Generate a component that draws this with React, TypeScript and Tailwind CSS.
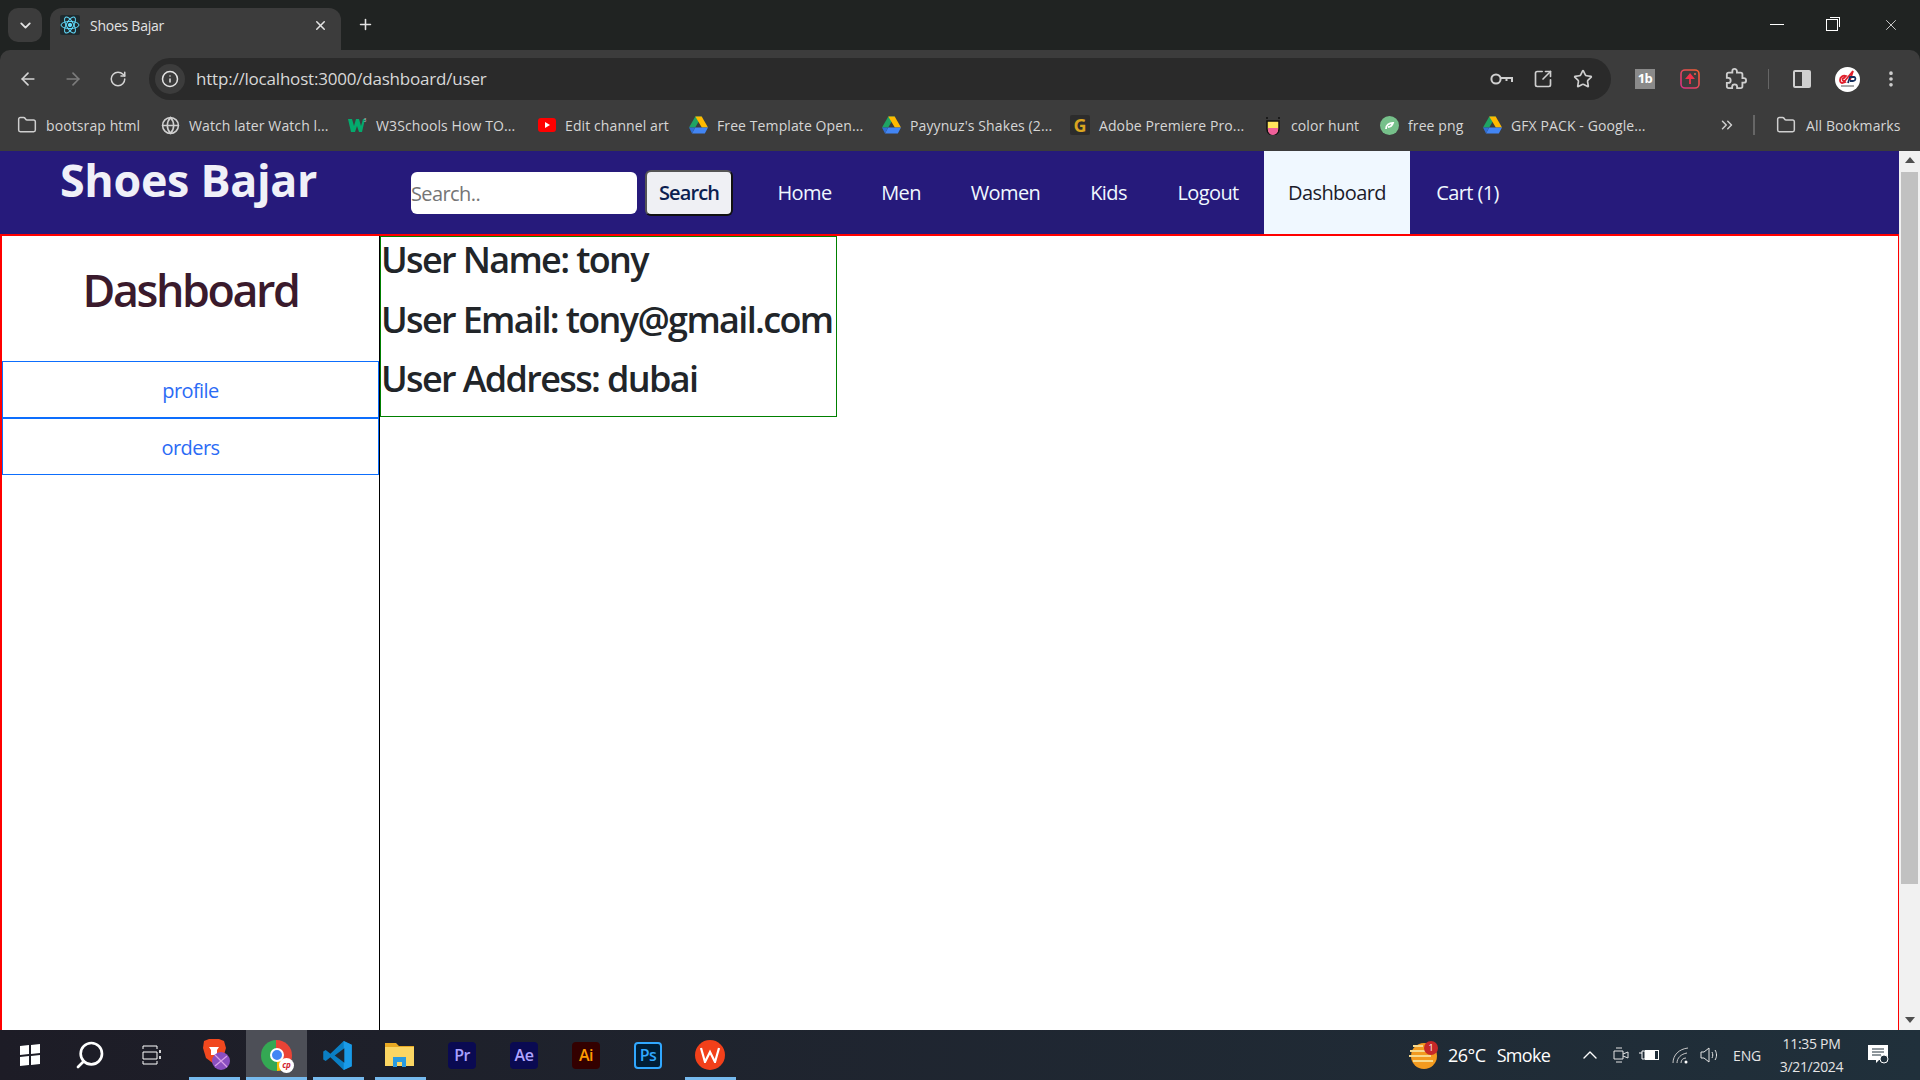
import { ArrowLeft, ArrowRight, RotateCw, Info, SquareArrowOutUpRight, Star, EllipsisVertical, Folder, Globe, ChevronDown, ChevronUp, ChevronsRight, X, Plus, Search } from "lucide-react";

function ReactIcon() {
  return (
    <div className="w-[20px] h-[20px] bg-[#1f2a2e] rounded-[2px] ml-[10px] flex items-center justify-center">
      <svg width="20" height="20" viewBox="0 0 20 20" fill="none" stroke="#61dafb" strokeWidth="1">
        <circle cx="10" cy="10" r="1.7" fill="#61dafb" />
        <ellipse cx="10" cy="10" rx="9" ry="3.6" />
        <ellipse cx="10" cy="10" rx="9" ry="3.6" transform="rotate(60 10 10)" />
        <ellipse cx="10" cy="10" rx="9" ry="3.6" transform="rotate(120 10 10)" />
      </svg>
    </div>
  );
}

function Drive() {
  return (
    <svg width="19" height="18" viewBox="0 0 19 18" className="shrink-0">
      <polygon points="6.3,0.5 12.7,0.5 6.2,11.6 0,11.6" fill="#1fa463" />
      <polygon points="12.7,0.5 19,11.6 12.8,11.6 6.3,0.5" fill="#ffba00" />
      <polygon points="6.2,11.6 19,11.6 15.8,17.5 3,17.5" fill="#4285f4" />
      <polygon points="0,11.6 6.2,11.6 3,17.5" fill="#2f6fd6" />
    </svg>
  );
}

function Bookmark({ w, icon, text }: { w: string; icon: React.ReactNode; text: string }) {
  return (
    <div className={`${w} shrink-0 flex items-center gap-[9px] whitespace-nowrap`}>
      {icon}
      <span className="text-[14px] tracking-[0.1px] text-[#d6d6d6]">{text}</span>
    </div>
  );
}

function TabStrip() {
  return (
    <div className="h-[50px] bg-[#202322] flex items-start shrink-0">
      <div className="ml-[8px] mt-[8px] w-[34px] h-[34px] bg-[#3c3c3c] rounded-[10px] flex items-center justify-center">
        <ChevronDown size={17} strokeWidth={2.6} color="#e3e3e3" />
      </div>
      <div className="ml-[8px] mt-[8px] w-[291px] h-[42px] bg-[#3c3c3c] rounded-t-[12px] flex items-center pb-[8px]">
        <ReactIcon />
        <span className="ml-[10px] text-[14px] tracking-[-0.25px] text-[#e3e3e3]">Shoes Bajar</span>
        <X size={15} strokeWidth={2.4} color="#e3e3e3" className="ml-auto mr-[13px]" />
      </div>
      <Plus size={17} strokeWidth={2.2} color="#e3e3e3" className="ml-[16px] mt-[16px]" />
      <div className="ml-auto flex items-center h-[50px]">
        <div className="w-[14px] h-px bg-white mr-[42px] -mt-[2px]" />
        <div className="relative w-[12px] h-[12px] border border-white mr-[44px] -mt-[1px]">
          <div className="absolute -top-[3px] -right-[3px] w-[10px] h-[10px] border-t border-r border-white" />
        </div>
        <X size={18} strokeWidth={1} color="#ffffff" className="mr-[20px] -mt-[1px]" />
      </div>
    </div>
  );
}

function Toolbar() {
  return (
    <div className="h-[50px] bg-[#3c3c3c] rounded-t-[10px] flex items-center shrink-0">
      <ArrowLeft size={20} strokeWidth={2} color="#d4d4d4" className="ml-[18px] mt-[8px]" />
      <ArrowRight size={20} strokeWidth={2} color="#7c7c7c" className="ml-[25px] mt-[8px]" />
      <RotateCw size={18} strokeWidth={2} color="#d4d4d4" className="ml-[26px] mt-[8px]" />
      <div className="ml-[22px] mt-[8px] w-[1462px] h-[42px] bg-[#2a2a2a] rounded-full flex items-center">
        <div className="ml-[6px] w-[30px] h-[30px] rounded-full bg-[#3c3c3c] flex items-center justify-center">
          <Info size={18} strokeWidth={2} color="#e3e3e3" />
        </div>
        <span className="ml-[11px] text-[17px] tracking-[-0.2px] text-[#d8d8d8]">http://localhost:3000/dashboard/user</span>
        <div className="ml-auto flex items-center gap-[20px] mr-[18px]">
          <svg width="23" height="14" viewBox="0 0 23 14" fill="none" stroke="#cfcfcf" strokeWidth="2">
            <circle cx="6" cy="7" r="4.6" />
            <path d="M11 6h11v4M16.5 6v3" />
          </svg>
          <SquareArrowOutUpRight size={20} strokeWidth={2} color="#cfcfcf" />
          <Star size={20} strokeWidth={2} color="#cfcfcf" />
        </div>
      </div>
      <div className="ml-[24px] mt-[8px] w-[20px] h-[20px] bg-[#8a8a8a] flex items-center justify-center">
        <span className="text-[13px] font-bold text-white tracking-[-0.5px]">1b</span>
      </div>
      <svg width="20" height="20" viewBox="0 0 20 20" fill="none" className="ml-[25px] mt-[8px]">
        <defs>
          <linearGradient id="pinkGrad" x1="1" y1="0" x2="0" y2="1">
            <stop offset="0" stopColor="#f2622e" />
            <stop offset="1" stopColor="#d92f87" />
          </linearGradient>
        </defs>
        <rect x="1" y="1" width="18" height="18" rx="4" stroke="url(#pinkGrad)" strokeWidth="1.6" />
        <path d="M10 15V7M10 5.5l-3 3.5h6z" stroke="#f0324a" strokeWidth="1.8" fill="#f0324a" />
        <circle cx="15" cy="5" r="1" fill="#f0624a" />
      </svg>
      <svg width="22" height="22" viewBox="0 0 24 24" fill="none" stroke="#cfcfcf" strokeWidth="2" className="ml-[25px] mt-[8px]">
        <path d="M20.5 11H19V7a2 2 0 0 0-2-2h-4V3.5a2.5 2.5 0 0 0-5 0V5H4a2 2 0 0 0-2 2v3.8h1.5a2.7 2.7 0 0 1 0 5.4H2V20a2 2 0 0 0 2 2h3.8v-1.5a2.7 2.7 0 0 1 5.4 0V22H17a2 2 0 0 0 2-2v-4h1.5a2.5 2.5 0 0 0 0-5z" />
      </svg>
      <div className="ml-[21px] mt-[8px] w-px h-[20px] bg-[#666666]" />
      <div className="ml-[24px] mt-[8px] w-[18px] h-[18px] rounded-[2px] border-2 border-[#cfcfcf] flex justify-end">
        <div className="w-[7px] h-full bg-[#cfcfcf]" />
      </div>
      <svg width="25" height="25" viewBox="0 0 25 25" className="ml-[24px] mt-[8px]">
        <circle cx="12.5" cy="12.5" r="12.5" fill="#ffffff" />
        <path d="M5 13c0-3 3-5 6-4l-2 2c-2 0-2 3 0 3l1 1-3 1c-1 0-2-1-2-3zM9 15l9-11-3 9" stroke="#e0202c" strokeWidth="1.8" fill="none" />
        <path d="M13 16l2-6h4c2 0 2 4-1 4h-3" stroke="#15305f" strokeWidth="1.8" fill="none" />
        <path d="M6 19h13" stroke="#555555" strokeWidth="1" />
      </svg>
      <EllipsisVertical size={20} strokeWidth={2.4} color="#cfcfcf" className="ml-[21px] mt-[8px]" />
    </div>
  );
}

function Bookmarks() {
  const folder = <Folder size={20} strokeWidth={1.8} color="#cfcfcf" className="shrink-0" />;
  return (
    <div className="h-[51px] bg-[#3c3c3c] flex items-center pl-[17px] pb-[1px] shrink-0">
      <Bookmark w="w-[144px]" icon={folder} text="bootsrap html" />
      <Bookmark w="w-[187px]" icon={<Globe size={19} strokeWidth={2} color="#cfcfcf" className="shrink-0" />} text="Watch later Watch l..." />
      <Bookmark
        w="w-[190px]"
        icon={
          <svg width="19" height="16" viewBox="0 0 19 16" className="shrink-0">
            <path d="M0 2h4l2 7 2-7h3l2 7 2-7h2l-3 13h-3l-2-6-2 6H3z" fill="#04aa6d" />
            <text x="15.5" y="5" fontSize="5" fill="#cfcfcf">3</text>
          </svg>
        }
        text="W3Schools How TO..."
      />
      <Bookmark
        w="w-[151px]"
        icon={
          <svg width="18" height="14" viewBox="0 0 18 14" className="shrink-0">
            <rect width="18" height="14" rx="3" fill="#ff0000" />
            <polygon points="7,4 12,7 7,10" fill="#ffffff" />
          </svg>
        }
        text="Edit channel art"
      />
      <Bookmark w="w-[193px]" icon={<Drive />} text="Free Template Open..." />
      <Bookmark w="w-[188px]" icon={<Drive />} text="Payynuz's Shakes (2..." />
      <Bookmark
        w="w-[194px]"
        icon={
          <div className="w-[20px] h-[20px] bg-[#2c2c2c] rounded-[2px] flex items-center justify-center shrink-0">
            <span className="text-[18px] font-bold leading-none text-[#d9a520]">G</span>
          </div>
        }
        text="Adobe Premiere Pro..."
      />
      <Bookmark
        w="w-[116px]"
        icon={
          <svg width="18" height="20" viewBox="0 0 18 20" className="shrink-0">
            <circle cx="3" cy="3" r="1" fill="#111" />
            <circle cx="15" cy="3" r="1" fill="#111" />
            <path d="M3 6h12v8a6 6 0 0 1-12 0z" fill="#ffe45c" stroke="#111" strokeWidth="1.5" />
            <path d="M4 13h10v2a5 5 0 0 1-10 0z" fill="#f0609a" />
          </svg>
        }
        text="color hunt"
      />
      <Bookmark
        w="w-[103px]"
        icon={
          <svg width="19" height="19" viewBox="0 0 19 19" className="shrink-0">
            <circle cx="9.5" cy="9.5" r="9.5" fill="#76c08a" />
            <path d="M6 13c0-4 3-6 7-6-1 3-2 4-5 4" stroke="#ffffff" strokeWidth="1.8" fill="none" />
          </svg>
        }
        text="free png"
      />
      <Bookmark w="w-[235px]" icon={<Drive />} text="GFX PACK - Google..." />
      <ChevronsRight size={18} strokeWidth={2} color="#cfcfcf" />
      <div className="ml-[17px] w-[2px] h-[20px] bg-[#666666]" />
      <div className="ml-[21px] flex items-center gap-[10px] whitespace-nowrap">
        {folder}
        <span className="text-[14px] tracking-[0.1px] text-[#d6d6d6]">All Bookmarks</span>
      </div>
    </div>
  );
}

function NavLink({ w, text, active }: { w: string; text: string; active?: boolean }) {
  return (
    <div className={`${w} h-full flex items-center justify-center whitespace-nowrap text-[20px] tracking-[-0.6px] ${active ? "bg-[#f0f8ff] text-[#1b1b2a]" : "text-[#f0f8ff]"}`}>
      {text}
    </div>
  );
}

function Nav() {
  return (
    <div className="h-[83px] bg-[#261a7b] flex items-center shrink-0">
      <div className="w-[411px] pl-[60px] self-start pt-[2px]">
        <span className="text-[44.8px] leading-[54px] font-bold tracking-[-0.3px] text-[#f0f0f8]">Shoes Bajar</span>
      </div>
      <div className="w-[226px] h-[42px] bg-white rounded-[6px] flex items-center pt-[2px] text-[20px] tracking-[-0.6px] text-[#757575]">Search..</div>
      <div className="ml-[8px] w-[88px] h-[46px] bg-[#eff0f4] rounded-[6px] border-2 border-t-[#555555] border-l-[#555555] border-r-[#111111] border-b-[#111111] flex items-center justify-center text-[20px] font-semibold tracking-[-0.9px] text-[#0b2050]">Search</div>
      <div className="ml-[20px] h-full flex">
        <NavLink w="w-[103px]" text="Home" />
        <NavLink w="w-[90px]" text="Men" />
        <NavLink w="w-[119px]" text="Women" />
        <NavLink w="w-[87px]" text="Kids" />
        <NavLink w="w-[112px]" text="Logout" />
        <NavLink w="w-[146px]" text="Dashboard" active />
        <NavLink w="w-[115px]" text="Cart (1)" />
      </div>
    </div>
  );
}

function Body() {
  return (
    <div className="flex-1 min-h-0 border-t-2 border-l-2 border-r border-[#ff0000] flex items-start bg-white">
      <div className="w-[378px] h-full border-r border-black shrink-0">
        <div className="h-[125px] pt-[27px] text-center text-[44.8px] leading-[54px] font-semibold tracking-[-2.4px] text-[#3a1a2c]">Dashboard</div>
        <div className="h-[57px] border border-[#0d6efd] pt-[2px] flex items-center justify-center text-[20px] tracking-[-0.6px] text-[#2b6bf5]">profile</div>
        <div className="h-[57px] border border-[#0d6efd] pt-[2px] flex items-center justify-center text-[20px] tracking-[-0.6px] text-[#2b6bf5]">orders</div>
      </div>
      <div className="w-[457px] h-[181px] border border-[#008000] pt-[1px] text-[36px] leading-[43px] font-semibold tracking-[-1.65px] text-[#212529] whitespace-nowrap">
        <div className="mb-[17px]">User Name: tony</div>
        <div className="mb-[16px]">User Email: tony@gmail.com</div>
        <div>User Address: dubai</div>
      </div>
    </div>
  );
}

function Scrollbar() {
  return (
    <div className="w-[21px] h-full bg-[#f1f1f1] flex flex-col items-center shrink-0">
      <div className="mt-[6px] w-0 h-0 border-l-[5px] border-r-[5px] border-b-[6px] border-l-transparent border-r-transparent border-b-[#505050]" />
      <div className="mt-[9px] w-[17px] h-[712px] bg-[#c1c1c1]" />
      <div className="mt-auto mb-[7px] w-0 h-0 border-l-[5px] border-r-[5px] border-t-[6px] border-l-transparent border-r-transparent border-t-[#505050]" />
    </div>
  );
}

function AppTile({ bg, color, text, ring, ml }: { bg: string; color: string; text: string; ring?: string; ml: string }) {
  return (
    <div className={`${ml} w-[28px] h-[27px] rounded-[4px] flex items-center justify-center text-[16px] font-semibold tracking-[-0.5px] ${ring ?? ""}`} style={{ background: bg, color }}>
      {text}
    </div>
  );
}

function Taskbar() {
  return (
    <div className="h-[50px] bg-gradient-to-r from-[#1d1c26] to-[#20303b] flex items-center shrink-0 relative">
      <div className="ml-[20px] grid grid-cols-2 gap-[1.5px] w-[20px] h-[20px] -skew-y-[6deg]">
        <div className="bg-white" />
        <div className="bg-white" />
        <div className="bg-white" />
        <div className="bg-white" />
      </div>
      <Search size={32} strokeWidth={2} color="#ffffff" className="ml-[34px] -scale-x-100" />
      <svg width="20" height="20" viewBox="0 0 20 20" fill="none" stroke="#ffffff" strokeWidth="1" className="ml-[36px]">
        <path d="M1 1h14M1 4V1M15 4V1M1 7h14v7H1zM1 19h14M1 16v3M15 16v3" />
        <path d="M18 5v3M18 11v3" strokeWidth="1.6" />
      </svg>
      <svg width="34" height="32" viewBox="0 0 34 32" className="ml-[38px]">
        <path d="M4 2l5-2h10l5 2 2 7-3 10-9 6-8-6L3 9z" fill="#f1481e" />
        <path d="M9 8h10l-2 3v5h-6v-5z" fill="#ffffff" />
        <circle cx="21" cy="22" r="9" fill="#8a4fc0" />
        <path d="M15 16l12 12M27 17l-12 10" stroke="#d8a0e8" strokeWidth="1.2" />
      </svg>
      <div className="ml-[12px] w-[61px] h-[50px] bg-[#4d4f57] flex items-center justify-center">
        <div className="relative w-[31px] h-[31px] rounded-full bg-[conic-gradient(#ea4335_0_33%,#fbbc05_33%_50%,#34a853_50%_100%)] flex items-center justify-center">
          <div className="w-[14px] h-[14px] rounded-full bg-[#4285f4] border-2 border-white" />
          <div className="absolute -right-[2px] -bottom-[2px] w-[15px] h-[15px] rounded-full bg-white flex items-center justify-center text-[8px] font-bold italic text-[#d0202c]">cp</div>
        </div>
      </div>
      <svg width="31" height="31" viewBox="0 0 100 100" className="ml-[15px]">
        <path d="M70 3 96 15v70L70 97 27 56 12 68 4 63V37l8-5 15 12z" fill="#0a7fc4" />
        <path d="M70 3 96 15v70L70 97z" fill="#1a9be8" />
        <path d="M72 27 41 50l31 23z" fill="#1e2630" />
      </svg>
      <svg width="29" height="31" viewBox="0 0 29 31" className="ml-[32px]">
        <path d="M0 3h11l3 3h15v20H0z" fill="#e8a923" />
        <path d="M0 7h29v19H0z" fill="#fbd663" />
        <path d="M8 17h13v10h-4v-5h-5v5H8z" fill="#2a9be0" />
      </svg>
      <AppTile ml="ml-[34px]" bg="#0a0a52" color="#a8a0ff" text="Pr" />
      <AppTile ml="ml-[34px]" bg="#0a0a52" color="#b0a4ff" text="Ae" />
      <AppTile ml="ml-[34px]" bg="#330000" color="#ff9a00" text="Ai" />
      <AppTile ml="ml-[34px]" bg="#001e36" color="#31a8ff" text="Ps" ring="border-2 border-[#31a8ff]" />
      <div className="ml-[33px] w-[30px] h-[30px] rounded-full bg-[#f2401a] flex items-center justify-center">
        <svg width="20" height="16" viewBox="0 0 20 16" fill="none" stroke="#ffffff" strokeWidth="2.2">
          <path d="M1 1l4 14 5-10 5 10 4-14" />
        </svg>
      </div>
      <svg width="30" height="28" viewBox="0 0 30 28" className="ml-[683px] shrink-0">
        <circle cx="16" cy="15" r="13" fill="#f29a1f" />
        <path d="M5 5h10M2 10h16M1 15h22M5 20h20" stroke="#f7d98c" strokeWidth="2" />
        <circle cx="23" cy="7" r="7" fill="#c62828" />
        <text x="23" y="10" fontSize="9" fill="#ffffff" textAnchor="middle">1</text>
      </svg>
      <span className="ml-[10px] text-[18px] tracking-[-0.5px] text-white whitespace-nowrap">26°C</span>
      <span className="ml-[11px] text-[18px] tracking-[-0.7px] text-white">Smoke</span>
      <ChevronUp size={24} strokeWidth={1.4} color="#ffffff" className="ml-[28px]" />
      <svg width="16" height="18" viewBox="0 0 16 18" fill="none" stroke="#e5e5e5" strokeWidth="1" className="ml-[11px]">
        <path d="M1 5h9v8H1zM10 8l5-2v6l-5-2M3 2h6M3 16h6" />
      </svg>
      <svg width="21" height="12" viewBox="0 0 21 12" className="ml-[10px]">
        <path d="M0 4h3M3 2h3v8H3z" stroke="#ffffff" fill="none" />
        <rect x="6.5" y="1.5" width="13" height="9" fill="none" stroke="#ffffff" />
        <rect x="7" y="2" width="9" height="8" fill="#ffffff" />
      </svg>
      <svg width="17" height="17" viewBox="0 0 17 17" fill="none" stroke="#c8c8c8" strokeWidth="1" className="ml-[12px]">
        <path d="M1 16C1 8 7 2 16 1M5 16c0-5 4-9 10-10M9 16c0-3 2-5 5-5" />
        <circle cx="14" cy="15" r="1.5" fill="#ffffff" stroke="none" />
      </svg>
      <svg width="20" height="18" viewBox="0 0 20 18" fill="none" stroke="#e5e5e5" strokeWidth="1" className="ml-[11px]">
        <path d="M1 6h3l5-4v14l-5-4H1zM12 6c1 2 1 4 0 6M15 4c2 3 2 7 0 10" />
      </svg>
      <span className="ml-[13px] text-[14px] tracking-[-0.2px] text-[#e5e5e5]">ENG</span>
      <div className="ml-[17px] w-[67px] flex flex-col items-center text-[14px] leading-[23px] text-[#e5e5e5] tracking-[-0.3px] whitespace-nowrap">
        <span>11:35 PM</span>
        <span>3/21/2024</span>
      </div>
      <svg width="22" height="20" viewBox="0 0 22 20" className="ml-[23px]">
        <path d="M0 0h20v15h-9l-3 3v-3H0z" fill="#ffffff" />
        <path d="M4 4h12M4 7h12M4 10h9" stroke="#20303b" strokeWidth="1" />
        <circle cx="16" cy="14" r="4" fill="#20303b" stroke="#ffffff" />
      </svg>
      <div className="absolute left-[189px] bottom-0 w-[51px] h-[3px] bg-[#76b9ed]" />
      <div className="absolute left-[246px] bottom-0 w-[61px] h-[3px] bg-[#76b9ed]" />
      <div className="absolute left-[313px] bottom-0 w-[51px] h-[3px] bg-[#76b9ed]" />
      <div className="absolute left-[375px] bottom-0 w-[51px] h-[3px] bg-[#76b9ed]" />
      <div className="absolute left-[685px] bottom-0 w-[51px] h-[3px] bg-[#76b9ed]" />
    </div>
  );
}

export default function App() {
  return (
    <div className="w-[1920px] h-screen flex flex-col overflow-hidden bg-[#202322] font-['Open_Sans',sans-serif]">
      <TabStrip />
      <Toolbar />
      <Bookmarks />
      <div className="flex-1 min-h-0 flex">
        <div className="flex-1 min-w-0 flex flex-col">
          <Nav />
          <Body />
        </div>
        <Scrollbar />
      </div>
      <Taskbar />
    </div>
  );
}
